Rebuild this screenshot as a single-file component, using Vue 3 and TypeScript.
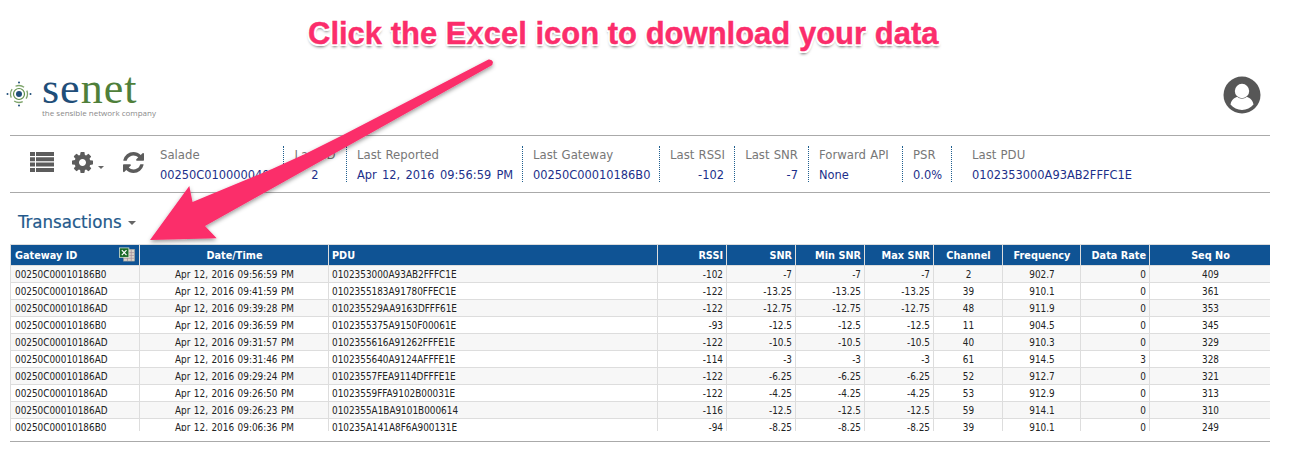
<template>
  <div class="page">
    <header class="top">
      <div class="logo">
        <svg class="logo-mark" width="26" height="26" viewBox="0 0 26 26">
          <circle cx="13" cy="13" r="3" fill="#1f4e79" />
          <circle cx="13" cy="13" r="5.5" fill="none" stroke="#5f8f4a" stroke-width="1.2" />
          <circle cx="13" cy="13" r="8.5" fill="none" stroke="#7fa56c" stroke-width="1.3" stroke-dasharray="9 4.4" stroke-dashoffset="4" />
          <circle cx="13" cy="1.5" r="1" fill="#1f4e79" />
          <circle cx="13" cy="24.5" r="1" fill="#1f4e79" />
          <circle cx="1.5" cy="13" r="1" fill="#1f4e79" />
          <circle cx="24.5" cy="13" r="1" fill="#1f4e79" />
        </svg>
        <div class="logo-text">
          <div class="wordmark"><span class="se">se</span><span class="net">net</span></div>
          <div class="tagline">the sensible network company</div>
        </div>
      </div>
      <svg class="avatar" width="38" height="38" viewBox="0 0 38 38">
        <circle cx="19" cy="19" r="18.5" fill="#575757" />
        <circle cx="19" cy="15" r="7.2" fill="#fff" />
        <path d="M7.5 28.5c1-5.5 5-7.500 7-7.500 1.300 1.200 2.800 1.700 4.500 1.700s3.200-.5 4.500-1.700c2 0 6 2 7 7.500-2.800 3.400-7 5.500-11.500 5.500s-8.700-2.100-11.500-5.500z" fill="#fff" />
      </svg>
    </header>

    <section class="stats">
      <div class="tools">
        <svg class="tool-list" width="24" height="20" viewBox="0 0 24 20">
          <path d="M0 0h5v4H0zM6 0h18v4H6zM0 5.300h5v4H0zM6 5.300h18v4H6zM0 10.600h5v4H0zM6 10.600h18v4H6zM0 16h5v4H0zM6 16h18v4H6z" fill="#5c5c5c" />
        </svg>
        <svg class="tool-cog" width="21" height="21" viewBox="128 128 1536 1536">
          <path fill="#5c5c5c" d="M1152 896q0-106-75-181t-181-75-181 75-75 181 75 181 181 75 181-75 75-181zm512-109v222q0 12-8 23t-20 13l-185 28q-19 54-39 91 35 50 107 138 10 12 10 25t-9 23q-27 37-99 108t-94 71q-12 0-26-9l-138-108q-44 23-91 38-16 136-29 186-7 28-36 28h-222q-14 0-24.500-8.500t-11.500-21.500l-28-184q-49-16-90-37l-141 107q-10 9-25 9-14 0-25-11-126-114-165-168-7-10-7-23 0-12 8-23 15-21 51-66.500t54-70.500q-27-50-41-99l-183-27q-13-2-21-12.500t-8-23.500v-222q0-12 8-23t19-13l186-28q14-46 39-92-40-57-107-138-10-12-10-24 0-10 9-23 26-36 98.500-107.500t94.500-71.500q13 0 26 10l138 107q44-23 91-38 16-136 29-186 7-28 36-28h222q14 0 24.500 8.500t11.500 21.500l28 184q49 16 90 37l142-107q9-9 24-9 13 0 25 10 129 119 165 170 7 8 7 22 0 12-8 23-15 21-51 66.500t-54 70.500q26 50 41 98l183 28q13 2 21 12.500t8 23.500z" />
        </svg>
        <span class="caret tool-caret"></span>
        <svg class="tool-refresh" width="21" height="21" viewBox="128 128 1536 1536">
          <path fill="#5c5c5c" d="M1639 1056q0 5-1 7-64 268-268 434.500t-478 166.500q-146 0-282.500-55t-243.500-157l-129 129q-19 19-45 19t-45-19-19-45v-448q0-26 19-45t45-19h448q26 0 45 19t19 45-19 45l-137 137q71 66 161 102t187 36q134 0 250-65t186-179q11-17 53-117 8-23 30-23h192q13 0 22.500 9.500t9.500 22.500zm25-800v448q0 26-19 45t-45 19h-448q-26 0-45-19t-19-45 19-45l138-138q-148-137-349-137-134 0-250 65t-186 179q-11 17-53 117-8 23-30 23h-199q-13 0-22.500-9.500t-9.500-22.500v-7q65-268 270-434.500t480-166.500q146 0 284 55.500t245 156.500l130-129q19-19 45-19t45 19 19 45z" />
        </svg>
      </div>
      <div class="stat-grid">
        <div v-for="s in stats" :key="s.label" class="stat" :class="s.cls">
          <div class="stat-label">{{ s.label }}</div>
          <div class="stat-value">{{ s.value }}</div>
        </div>
      </div>
    </section>

    <h2 class="title">Transactions <span class="caret title-caret"></span></h2>

    <div class="table-wrap">
      <table>
        <colgroup>
          <col v-for="(w, i) in colWidths" :key="i" :style="{ width: w + 'px' }" />
        </colgroup>
        <thead>
          <tr>
            <th class="l gw-head">
              Gateway ID
              <svg class="excel" width="16" height="15" viewBox="0 0 17 15">
                <rect x="5" y="2" width="11.500" height="12.500" fill="#d9d4c8" stroke="#a9a49a" stroke-width=".6" />
                <path d="M9 2v12.500M13 2v12.500M5 5.500h11.500M5 8.500h11.500M5 11.500h11.500" stroke="#a8909c" stroke-width=".8" />
                <rect x=".5" y=".5" width="10" height="10" fill="#1a6a28" stroke="#dfe8d8" stroke-width=".8" />
                <path d="M3 2.800l5 5.400M8 2.800l-5 5.400" stroke="#fff" stroke-width="1.300" />
              </svg>
            </th>
            <th>Date/Time</th>
            <th class="l">PDU</th>
            <th class="r">RSSI</th>
            <th class="r">SNR</th>
            <th class="r">Min SNR</th>
            <th class="r">Max SNR</th>
            <th>Channel</th>
            <th>Frequency</th>
            <th class="r">Data Rate</th>
            <th>Seq No</th>
          </tr>
        </thead>
        <tbody>
          <tr v-for="r in rows" :key="r.seq">
            <td class="l">{{ r.gw }}</td>
            <td class="date">Apr 12, 2016 {{ r.time }} PM</td>
            <td class="l">{{ r.pdu }}</td>
            <td class="r">{{ r.rssi }}</td>
            <td class="r">{{ r.snr }}</td>
            <td class="r">{{ r.snr }}</td>
            <td class="r">{{ r.snr }}</td>
            <td>{{ r.ch }}</td>
            <td>{{ r.freq }}</td>
            <td class="r">{{ r.rate }}</td>
            <td>{{ r.seq }}</td>
          </tr>
        </tbody>
      </table>
    </div>
    <div class="bottom-rule"></div>

    <!-- annotation drawn over the screenshot -->
    <svg class="arrow" width="1289" height="457" viewBox="0 0 1289 457">
      <defs>
        <filter id="arrow-shadow" x="-10%" y="-10%" width="120%" height="120%">
          <feDropShadow dx="0" dy="2" stdDeviation="2" flood-color="#000" flood-opacity="0.4" />
        </filter>
      </defs>
      <path
        d="M488.500 59.500 Q492 59 493 62 Q493 65 490.500 66 L205 226 L216.700 238.300 L150 240 L189.300 186 L192.500 202 L272 169 L305 154 L343 135 Z"
        fill="#fb2d6b"
        filter="url(#arrow-shadow)"
      />
    </svg>
    <div class="note">Click the Excel icon to download your data</div>
  </div>
</template>

<script setup lang="ts">
interface Row {
  gw: string
  time: string
  pdu: string
  rssi: number
  snr: number
  ch: number
  freq: string
  rate: number
  seq: number
}

const B0 = '00250C00010186B0'
const AD = '00250C00010186AD'

const stats = [
  { label: 'Salade', value: '00250C0100000404', cls: '' },
  { label: 'Last ID', value: '2', cls: 'center' },
  { label: 'Last Reported', value: 'Apr 12, 2016 09:56:59 PM', cls: '' },
  { label: 'Last Gateway', value: B0, cls: '' },
  { label: 'Last RSSI', value: '-102', cls: 'right' },
  { label: 'Last SNR', value: '-7', cls: 'right' },
  { label: 'Forward API', value: 'None', cls: '' },
  { label: 'PSR', value: '0.0%', cls: '' },
  { label: 'Last PDU', value: '0102353000A93AB2FFFC1E', cls: 'wide' }
]

const colWidths = [129, 189, 329, 69, 69, 69, 69, 69, 78, 69, 121]

const rows: Row[] = [
  { gw: B0, time: '09:56:59', pdu: '0102353000A93AB2FFFC1E', rssi: -102, snr: -7, ch: 2, freq: '902.7', rate: 0, seq: 409 },
  { gw: AD, time: '09:41:59', pdu: '0102355183A91780FFEC1E', rssi: -122, snr: -13.25, ch: 39, freq: '910.1', rate: 0, seq: 361 },
  { gw: AD, time: '09:39:28', pdu: '010235529AA9163DFFF61E', rssi: -122, snr: -12.75, ch: 48, freq: '911.9', rate: 0, seq: 353 },
  { gw: B0, time: '09:36:59', pdu: '0102355375A9150F00061E', rssi: -93, snr: -12.5, ch: 11, freq: '904.5', rate: 0, seq: 345 },
  { gw: AD, time: '09:31:57', pdu: '0102355616A91262FFFE1E', rssi: -122, snr: -10.5, ch: 40, freq: '910.3', rate: 0, seq: 329 },
  { gw: AD, time: '09:31:46', pdu: '0102355640A9124AFFFE1E', rssi: -114, snr: -3, ch: 61, freq: '914.5', rate: 3, seq: 328 },
  { gw: AD, time: '09:29:24', pdu: '01023557FEA9114DFFFE1E', rssi: -122, snr: -6.25, ch: 52, freq: '912.7', rate: 0, seq: 321 },
  { gw: AD, time: '09:26:50', pdu: '01023559FFA9102B00031E', rssi: -122, snr: -4.25, ch: 53, freq: '912.9', rate: 0, seq: 313 },
  { gw: AD, time: '09:26:23', pdu: '0102355A1BA9101B000614', rssi: -116, snr: -12.5, ch: 59, freq: '914.1', rate: 0, seq: 310 },
  { gw: B0, time: '09:06:36', pdu: '010235A141A8F6A900131E', rssi: -94, snr: -8.25, ch: 39, freq: '910.1', rate: 0, seq: 249 }
]
</script>

<style>
html,
body {
  background: #fff;
}
</style>

<style scoped>
.page {
  position: relative;
  width: 1289px;
  height: 457px;
  overflow: hidden;
  padding: 0 19px 0 10px;
  box-sizing: border-box;
  font-family: "DejaVu Sans Condensed", "DejaVu Sans", sans-serif;
  color: #222;
}
.top {
  height: 61px;
  border-bottom: 1px solid #aaa;
  display: flex;
  justify-content: space-between;
  align-items: flex-start;
  padding-top: 74px;
}
.logo {
  display: flex;
  align-items: flex-start;
  margin-left: -4px;
}
.logo-mark {
  margin-top: 7px;
}
.logo-text {
  margin-left: 10px;
}
.wordmark {
  font-family: "Liberation Serif", serif;
  font-size: 44px;
  line-height: 30px;
  letter-spacing: 1px;
}
.se {
  color: #1f4e79;
}
.net {
  color: #4f7f3a;
}
.tagline {
  font-family: "Open Sans", sans-serif;
  font-size: 8px;
  line-height: 10px;
  margin-top: 4px;
  color: #8a8a8a;
  white-space: nowrap;
}
.avatar {
  margin: 2px 9px 0 0;
}
.stats {
  display: flex;
  height: 57px;
  border-bottom: 1px solid #aaa;
  padding-top: 10px;
  box-sizing: border-box;
}
.tools {
  width: 140px;
  flex: none;
  display: flex;
  align-items: flex-start;
  padding: 6px 0 0 20px;
  box-sizing: border-box;
}
.tool-list {
  margin-right: 18px;
}
.tool-caret {
  margin: 14px 19px 0 5px;
}
.stat-grid {
  display: grid;
  grid-template-columns: 134px 63px 176px 137px 75px 74px 94px 49px auto;
  height: 36px;
}
.stat {
  padding: 1px 10px 0;
  border-right: 1px dotted #1f5f8f;
  box-sizing: border-box;
  white-space: nowrap;
  overflow: hidden;
}
.stat:last-child {
  border-right: none;
}
.stat.center {
  text-align: center;
}
.stat.right {
  text-align: right;
}
.stat.wide {
  padding-left: 20px;
}
.stat-label {
  font-size: 13px;
  line-height: 16px;
  word-spacing: 0.5px;
  color: #777;
}
.stat-value {
  font-size: 12.7px;
  line-height: 20px;
  margin-top: 2px;
  word-spacing: 1.7px;
  color: #1c2f8a;
}
.title {
  margin: 17px 0 0 8px;
  height: 34px;
  font-size: 18.5px;
  line-height: 24px;
  font-weight: 400;
  color: #245a8c;
  -webkit-text-stroke: 0.2px #245a8c;
}
.caret {
  display: inline-block;
  width: 0;
  height: 0;
  border-left: 3.5px solid transparent;
  border-right: 3.5px solid transparent;
  border-top: 3.5px solid #666;
}
.title-caret {
  vertical-align: 3px;
  margin-left: 1px;
  border-left-width: 4px;
  border-right-width: 4px;
  border-top-width: 4px;
}
.table-wrap {
  height: 187px;
  overflow: hidden;
}
table {
  table-layout: fixed;
  width: 1260px;
  border-collapse: collapse;
  font-size: 9.9px;
  color: #222;
}
th {
  height: 20px;
  padding: 0 3px 0 4px;
  background: #0f5394;
  color: #fff;
  font-size: 10.8px;
  font-weight: 700;
  text-align: center;
  border: 1px solid #ddd;
  white-space: nowrap;
}
td {
  height: 17px;
  padding: 0 3px 0 4px;
  border: 1px solid #ddd;
  text-align: center;
  white-space: nowrap;
  overflow: hidden;
  box-sizing: border-box;
}
td:nth-child(3),
th:nth-child(3) {
  padding-left: 3px;
}
.date {
  word-spacing: 0.7px;
}
tbody tr:nth-child(odd) {
  background: #f7f7f7;
}
.l,
th.l {
  text-align: left;
}
.r,
th.r {
  text-align: right;
}
.gw-head {
  position: relative;
}
.excel {
  position: absolute;
  right: 4px;
  top: 2px;
}
.bottom-rule {
  margin-top: 10px;
  border-bottom: 1px solid #aaa;
}
.arrow {
  position: absolute;
  left: 0;
  top: 0;
  pointer-events: none;
}
.note {
  position: absolute;
  left: 308px;
  top: 16px;
  font-family: "Liberation Sans", sans-serif;
  font-size: 31px;
  line-height: 36px;
  font-weight: 700;
  white-space: nowrap;
  color: #fb2d6b;
  -webkit-text-stroke: 0.4px #fb2d6b;
  text-shadow:
    -2px 0 0 #fff,
    2px 0 0 #fff,
    0 -2px 0 #fff,
    0 2px 0 #fff,
    -1.5px -1.5px 0 #fff,
    1.5px -1.5px 0 #fff,
    -1.5px 1.5px 0 #fff,
    1.5px 1.5px 0 #fff,
    0 3px 3px rgba(0, 0, 0, 0.55);
}
</style>
